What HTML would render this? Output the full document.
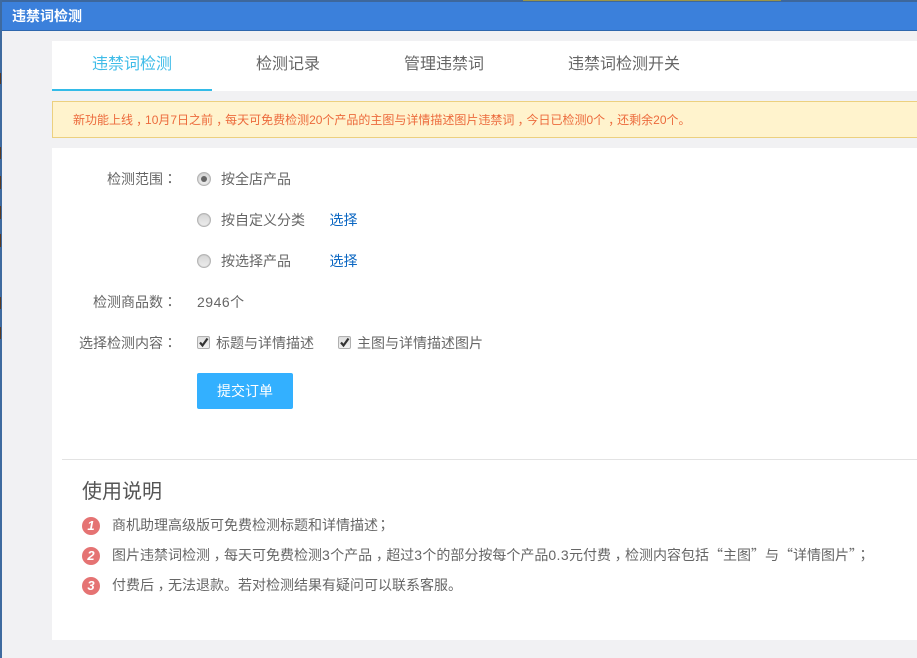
<!DOCTYPE html>
<html lang="zh"><head><meta charset="utf-8"><title>违禁词检测</title>
<style>
html,body{margin:0;padding:0;width:917px;height:658px;overflow:hidden;background:#f1f1f3}
body{position:relative;font-family:"Liberation Sans","Noto Sans CJK SC",sans-serif;color:#666;font-size:14px}
.a{position:absolute;white-space:nowrap;line-height:20px}
.b{position:absolute}
.p{font-family:"Noto Sans CJK TC",sans-serif}
.c{font-family:"Noto Sans CJK TC",sans-serif;position:relative;top:.3em}
.q{font-family:"Noto Sans CJK SC",sans-serif}
.d{letter-spacing:.4px}
.radio{position:absolute;left:197px;width:12px;height:12px;border-radius:50%;background:linear-gradient(#d6d6d6,#ececec);border:1px solid #b5b5b5;box-shadow:inset 0 0 1px #999}
.radio i{position:absolute;left:3px;top:3px;width:6px;height:6px;border-radius:50%;background:#666}
.check{position:absolute;top:336px;width:11px;height:11px;border:1px solid #b0b0b0;border-radius:2px;background:linear-gradient(#dedede,#f2f2f2)}
.num{position:absolute;left:82px;width:18px;height:18px;border-radius:50%;background:#e57373;color:#fff;font:italic bold 13px/18px "Liberation Sans",sans-serif;text-align:center}
.link{color:#0a66c2}
.s{position:absolute;left:0;width:1px;background:#5a3a22}
</style></head><body>
<div class="b" style="left:0;top:0;width:917px;height:2px;background:#3d679c"></div>
<div class="b" style="left:523px;top:0;width:258px;height:1px;background:#9a9448"></div>
<div class="b" style="left:0;top:2px;width:917px;height:28px;background:#3b80db"></div>
<div class="b" style="left:0;top:30px;width:917px;height:1px;background:#2f67ad"></div>
<div class="b" style="left:0;top:0;width:2px;height:658px;background:#3e6a9f"></div>
<div class="s" style="top:73px;height:11px"></div>
<div class="s" style="top:147px;height:12px"></div>
<div class="s" style="top:176px;height:13px"></div>
<div class="s" style="top:206px;height:13px"></div>
<div class="s" style="top:234px;height:13px"></div>
<div class="s" style="top:297px;height:12px"></div>
<div class="s" style="top:327px;height:12px"></div>
<div class="a" style="left:12px;top:6px;color:#fff;font-weight:bold">违禁词检测</div>

<div class="b" style="left:52px;top:41px;width:865px;height:50px;background:#fff"></div>
<div class="b" style="left:52px;top:89px;width:160px;height:2px;background:#33bbe8"></div>
<div class="a" style="left:92px;top:55px;font-size:16px;color:#3fbce8">违禁词检测</div>
<div class="a" style="left:256px;top:55px;font-size:16px">检测记录</div>
<div class="a" style="left:404px;top:55px;font-size:16px">管理违禁词</div>
<div class="a" style="left:568px;top:55px;font-size:16px">违禁词检测开关</div>

<div class="b" style="left:52px;top:101px;width:865px;height:35px;background:#fff3cd;border:1px solid #ecd07f;border-right:0"></div>
<div class="a" style="left:73px;top:110px;font-size:12px;color:#ec6a3c">新功能上线<span class="c" lang="zh-TW">，</span>10月7日之前<span class="c" lang="zh-TW">，</span>每天可免费检测20个产品的主图与详情描述图片违禁词<span class="c" lang="zh-TW">，</span>今日已检测0个<span class="c" lang="zh-TW">，</span>还剩余20个。</div>

<div class="b" style="left:52px;top:148px;width:865px;height:492px;background:#fff"></div>

<div class="a" style="left:107px;top:169px">检测范围<span class="p" lang="zh-TW">：</span></div>
<div class="radio" style="top:172px"><i></i></div>
<div class="a" style="left:221px;top:169px">按全店产品</div>
<div class="radio" style="top:213px"></div>
<div class="a" style="left:221px;top:210px">按自定义分类</div>
<div class="a link" style="left:329.5px;top:210px">选择</div>
<div class="radio" style="top:254px"></div>
<div class="a" style="left:221px;top:251px">按选择产品</div>
<div class="a link" style="left:329.5px;top:251px">选择</div>

<div class="a" style="left:93px;top:292px">检测商品数<span class="p" lang="zh-TW">：</span></div>
<div class="a" style="left:197px;top:292px"><span style="letter-spacing:.5px">2946</span>个</div>

<div class="a" style="left:79px;top:333px">选择检测内容<span class="p" lang="zh-TW">：</span></div>
<div class="check" style="left:197px"><svg width="11" height="11" viewBox="0 0 11 11" style="display:block"><path d="M2 5.5L4.5 8.5L9.5 1.5" fill="none" stroke="#333" stroke-width="2.2"/></svg></div>
<div class="a" style="left:216px;top:333px">标题与详情描述</div>
<div class="check" style="left:338px"><svg width="11" height="11" viewBox="0 0 11 11" style="display:block"><path d="M2 5.5L4.5 8.5L9.5 1.5" fill="none" stroke="#333" stroke-width="2.2"/></svg></div>
<div class="a" style="left:357px;top:333px">主图与详情描述图片</div>

<div class="b" style="left:197px;top:373px;width:96px;height:36px;background:#33b0ff;border-radius:2px"></div>
<div class="a" style="left:217px;top:381px;color:#fff">提交订单</div>

<div class="b" style="left:62px;top:459px;width:855px;height:1px;background:#e3e3e3"></div>
<div class="a" style="left:82px;top:479px;font-size:20px;line-height:26px;color:#555">使用说明</div>

<div class="num" style="top:517px">1</div>
<div class="a" style="left:112px;top:515px">商机助理高级版可免费检测标题和详情描述<span class="p" lang="zh-TW" style="margin-left:-2px">；</span></div>
<div class="num" style="top:547px">2</div>
<div class="a" style="left:112px;top:545px">图片违禁词检测<span class="c" lang="zh-TW">，</span>每天可免费检测<span class="d">3</span>个产品<span class="c" lang="zh-TW">，</span>超过<span class="d">3</span>个的部分按每个产品<span class="d">0.3</span>元付费<span class="c" lang="zh-TW">，</span>检测内容包括<span class="q">“</span>主图<span class="q">”</span>与<span class="q">“</span>详情图片<span class="q">”</span><span class="p" lang="zh-TW">；</span></div>
<div class="num" style="top:577px">3</div>
<div class="a" style="left:112px;top:575px">付费后<span class="c" lang="zh-TW">，</span>无法退款。若对检测结果有疑问可以联系客服。</div>
</body></html>
